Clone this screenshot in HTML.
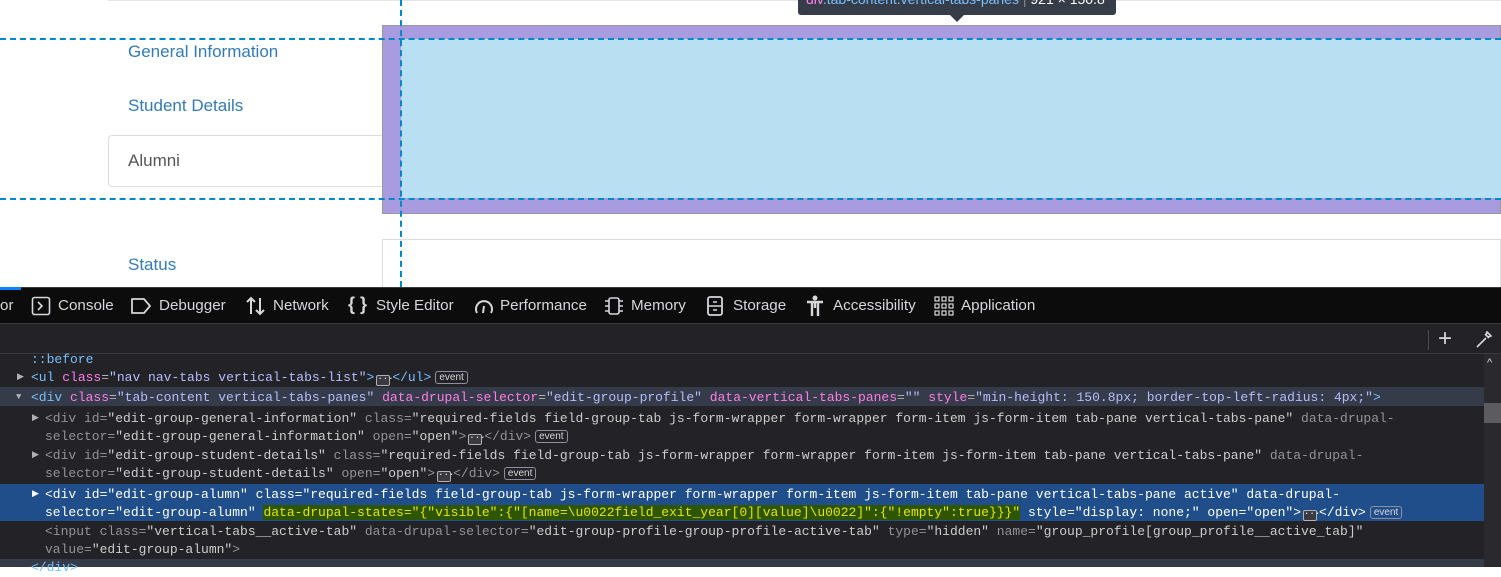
<!DOCTYPE html>
<html><head><meta charset="utf-8"><style>
*{margin:0;padding:0;box-sizing:border-box}
body{width:1501px;height:567px;overflow:hidden;background:#fff;position:relative;font-family:"Liberation Sans",sans-serif}
.a{position:absolute}
.nav{color:#337ab7;font-size:17px}
.tb{position:absolute;top:287px;left:0;width:1501px;height:37px;background:#0c0c0d;border-top:1px solid #38383d;border-bottom:1px solid #38383d;color:#d7d7db;font-size:15.2px}
.tb span{position:absolute;top:9px;white-space:nowrap}
.mk{position:absolute;top:354px;left:0;width:1501px;height:213px;background:#232327;font-family:"Liberation Mono",monospace;font-size:13px;color:#b1b1b3}
.ln{position:absolute;height:19px;line-height:19px;white-space:pre;margin-top:1px}
.t{color:#75bfff}.n{color:#ff7de9}.v{color:#b4bdff}.d{color:#939395}.c{color:#ccc}
.ev{display:inline-block;border:1px solid #8f8f9d;border-radius:3px;font-family:"Liberation Sans",sans-serif;font-size:10px;line-height:11px;padding:0 3px;color:#d7d7db;vertical-align:1px;margin-left:4px}
.el{display:inline-block;width:14px;height:11px;border:1px solid #b1b1b3;border-radius:2px;background:#3a3a40;font-size:9px;line-height:6px;text-align:center;vertical-align:0px;color:#fff;margin:0 2px}
.tri{position:absolute;color:#b1b1b3;font-size:9px;line-height:19px;margin-top:1px}
</style></head><body>
<div class="a" style="left:108px;top:0;width:1393px;height:1px;background:#e5e5e5"></div>
<div class="a" style="left:108px;top:135px;width:280px;height:52px;border:1px solid #ddd;border-radius:4px"></div>
<div class="a" style="left:382px;top:239px;width:1119px;height:60px;border:1px solid #ddd"></div>
<div class="a nav" style="left:128px;top:42px">General Information</div>
<div class="a nav" style="left:128px;top:96px">Student Details</div>
<div class="a" style="left:128px;top:151px;font-size:17px;color:#555">Alumni</div>
<div class="a nav" style="left:128px;top:255px">Status</div>
<div class="a" style="left:382px;top:25px;width:1119px;height:189px;background:#a89be0;border:1px solid #9a9a9a"></div>
<div class="a" style="left:401px;top:39px;width:1100px;height:159px;background:#b8e0f2"></div>
<div class="a" style="left:0;top:38px;width:1501px;border-top:2px dashed #0088cc"></div>
<div class="a" style="left:0;top:198px;width:1501px;border-top:2px dashed #0088cc"></div>
<div class="a" style="left:400px;top:0;height:287px;border-left:2px dashed #0088cc"></div>
<div class="a" style="left:798px;top:-8px;width:318px;height:23px;background:#373d48;border-radius:3px;font-size:14px;color:#fff;padding:0 8px;line-height:14px;white-space:nowrap;overflow:hidden"><span style="color:#ff7de9">div</span><span style="color:#75bfff">.tab-content.vertical-tabs-panes</span> <span style="color:#888">|</span> 921 × 150.8</div>
<div class="a" style="left:950px;top:15px;border:7px solid transparent;border-top-color:#373d48;border-bottom:0"></div>

<div class="tb">
<div class="a" style="left:0;top:-1px;width:21px;height:3px;background:#0a84ff"></div>
<span style="left:0">or</span>
<svg class="a" style="left:31px;top:8px" width="20" height="20" viewBox="0 0 20 20"><rect x="1.5" y="1.5" width="17" height="17" rx="2" fill="none" stroke="#d7d7db" stroke-width="1.6"/><path d="M7 6l4 4-4 4" fill="none" stroke="#d7d7db" stroke-width="1.6"/></svg>
<span style="left:58px">Console</span>
<svg class="a" style="left:130px;top:9px" width="22" height="18" viewBox="0 0 22 18"><path d="M2 2h12l6 7-6 7H2z" fill="none" stroke="#d7d7db" stroke-width="1.8" stroke-linejoin="round"/></svg>
<span style="left:159px">Debugger</span>
<svg class="a" style="left:245px;top:8px" width="22" height="20" viewBox="0 0 22 20"><path d="M6 18V2M2 6l4-4 4 4M15 2v16M11 14l4 4 4-4" fill="none" stroke="#d7d7db" stroke-width="2"/></svg>
<span style="left:273px">Network</span>
<span style="left:348px;font-size:18px;top:6px;font-weight:bold">{ }</span>
<span style="left:376px">Style Editor</span>
<svg class="a" style="left:473px;top:8px" width="22" height="20" viewBox="0 0 22 20"><path d="M4 17A8 8 0 1 1 18 17" fill="none" stroke="#d7d7db" stroke-width="2"/><path d="M11 10l-1 7" stroke="#d7d7db" stroke-width="2"/></svg>
<span style="left:500px">Performance</span>
<svg class="a" style="left:603px;top:8px" width="22" height="20" viewBox="0 0 22 20"><rect x="6" y="2" width="10" height="16" rx="2" fill="none" stroke="#d7d7db" stroke-width="1.6"/><path d="M2 5h4M2 10h4M2 15h4M16 5h4M16 10h4M16 15h4" stroke="#d7d7db" stroke-width="1.4"/></svg>
<span style="left:631px">Memory</span>
<svg class="a" style="left:706px;top:7px" width="18" height="22" viewBox="0 0 18 22"><rect x="2" y="2" width="14" height="18" rx="2" fill="none" stroke="#d7d7db" stroke-width="1.8"/><path d="M2 11h14M7 7h4M7 15h4" stroke="#d7d7db" stroke-width="1.6"/></svg>
<span style="left:733px">Storage</span>
<svg class="a" style="left:806px;top:7px" width="18" height="22" viewBox="0 0 18 22"><circle cx="9" cy="3" r="2.5" fill="#d7d7db"/><path d="M1 7h16M9 7v6M6 8v13M12 8v13" stroke="#d7d7db" stroke-width="2.4"/></svg>
<span style="left:833px">Accessibility</span>
<svg class="a" style="left:934px;top:8px" width="20" height="20" viewBox="0 0 20 20" fill="none" stroke="#d7d7db" stroke-width="1.2"><rect x="1" y="1" width="4" height="4"/><rect x="8" y="1" width="4" height="4"/><rect x="15" y="1" width="4" height="4"/><rect x="1" y="8" width="4" height="4"/><rect x="8" y="8" width="4" height="4"/><rect x="15" y="8" width="4" height="4"/><rect x="1" y="15" width="4" height="4"/><rect x="8" y="15" width="4" height="4"/><rect x="15" y="15" width="4" height="4"/></svg>
<span style="left:961px">Application</span>
</div>
<div class="a" style="left:0;top:324px;width:1501px;height:30px;background:#232327;border-bottom:1px solid #38383d"></div>
<div class="a" style="left:1428px;top:330px;width:1px;height:20px;background:#4a4a4f"></div>
<div class="a" style="left:1438px;top:325px;color:#d7d7db;font-size:24px">+</div>
<svg class="a" style="left:1474px;top:331px" width="18" height="18" viewBox="0 0 18 18"><path d="M3 16l9-9M11 3l4 4M13 1l4 4-3 1-2-2z" fill="none" stroke="#d7d7db" stroke-width="1.6"/></svg>

<div class="mk">
<div class="a" style="left:0;top:33px;width:1484px;height:19px;background:#353b48"></div>
<div class="a" style="left:0;top:130px;width:1484px;height:37px;background:#204e8a"></div>
<div class="a" style="left:1484px;top:0;width:17px;height:213px;background:#2a2a2e"></div>
<div class="a" style="left:1484px;top:49px;width:17px;height:20px;background:#5b5b60"></div>
<div class="a" style="left:1487px;top:3px;color:#ddd;font-size:11px;font-family:'Liberation Sans'">&#94;</div>
<div class="ln" style="top:-5px;left:31px;color:#75bfff">::before</div>
<span class="tri" style="left:17px;top:13px">▶</span>
<div class="ln" style="top:13px;left:31px"><span class="t">&lt;ul </span><span class="n">class</span>=<span class="v">"nav nav-tabs vertical-tabs-list"</span><span class="t">&gt;</span><span class="el">···</span><span class="t">&lt;/ul&gt;</span><span class="ev">event</span></div>
<span class="tri" style="left:16px;top:33px">▼</span>
<div class="ln" style="top:33px;left:31px"><span class="t">&lt;div </span><span class="n">class</span>=<span class="v">"tab-content vertical-tabs-panes"</span> <span class="n">data-drupal-selector</span>=<span class="v">"edit-group-profile"</span> <span class="n">data-vertical-tabs-panes</span>=<span class="v">""</span> <span class="n">style</span>=<span class="v">"min-height: 150.8px; border-top-left-radius: 4px;"</span><span class="t">&gt;</span></div>
<span class="tri" style="left:32px;top:54px">▶</span>
<div class="ln d" style="top:54px;left:45px">&lt;div id=<span class="c">"edit-group-general-information"</span> class=<span class="c">"required-fields field-group-tab js-form-wrapper form-wrapper form-item js-form-item tab-pane vertical-tabs-pane"</span> data-drupal-</div>
<div class="ln d" style="top:72px;left:45px">selector=<span class="c">"edit-group-general-information"</span> open=<span class="c">"open"</span>&gt;<span class="el">···</span>&lt;/div&gt;<span class="ev">event</span></div>
<span class="tri" style="left:32px;top:91px">▶</span>
<div class="ln d" style="top:91px;left:45px">&lt;div id=<span class="c">"edit-group-student-details"</span> class=<span class="c">"required-fields field-group-tab js-form-wrapper form-wrapper form-item js-form-item tab-pane vertical-tabs-pane"</span> data-drupal-</div>
<div class="ln d" style="top:109px;left:45px">selector=<span class="c">"edit-group-student-details"</span> open=<span class="c">"open"</span>&gt;<span class="el">···</span>&lt;/div&gt;<span class="ev">event</span></div>
<span class="tri" style="left:32px;top:130px;color:#fff">▶</span>
<div class="ln" style="top:130px;left:45px;color:#fff">&lt;div id="edit-group-alumn" class="required-fields field-group-tab js-form-wrapper form-wrapper form-item js-form-item tab-pane vertical-tabs-pane active" data-drupal-</div>
<div class="ln" style="top:148px;left:45px;color:#fff">selector="edit-group-alumn" <span style="background:#2e5500;color:#e5e500">data-drupal-states="{"visible":{"[name=\u0022field_exit_year[0][value]\u0022]":{"!empty":true}}}"</span> style="display: none;" open="open"&gt;<span class="el">···</span>&lt;/div&gt;<span class="ev">event</span></div>
<div class="ln d" style="top:167px;left:45px">&lt;input class=<span class="c">"vertical-tabs__active-tab"</span> data-drupal-selector=<span class="c">"edit-group-profile-group-profile-active-tab"</span> type=<span class="c">"hidden"</span> name=<span class="c">"group_profile[group_profile__active_tab]"</span></div>
<div class="ln d" style="top:185px;left:45px">value=<span class="c">"edit-group-alumn"</span>&gt;</div>
<div class="a" style="left:0;top:205px;width:1484px;height:8px;background:#353b48"></div>
<div class="ln" style="top:203px;color:#75bfff;left:31px">&lt;/div&gt;</div>
</div>
</body></html>
